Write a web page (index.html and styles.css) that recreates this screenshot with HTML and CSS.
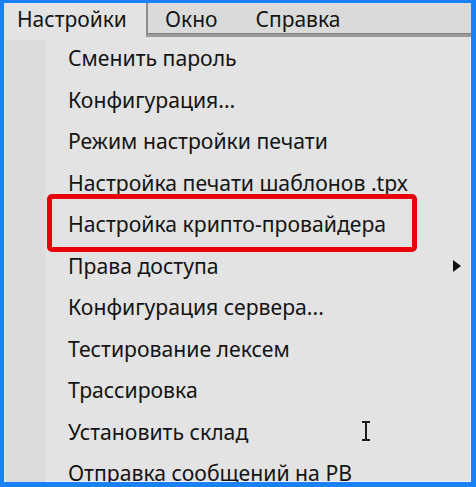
FILE: index.html
```html
<!DOCTYPE html>
<html lang="ru">
<head>
    <meta charset="UTF-8">
    <title>Меню Настройки</title>
    <link rel="stylesheet" href="styles.css">
</head>
<body>
    <div class="window">
        <div class="menubar">
            <div class="menu-tab open">Настройки</div>
            <div class="menu-rest">
                <span class="menu-tab">Окно</span>
                <span class="menu-tab">Справка</span>
            </div>
        </div>

        <div class="dropdown">
            <div class="icon-col"></div>
            <ul class="items">
                <li>Сменить пароль</li>
                <li>Конфигурация...</li>
                <li>Режим настройки печати</li>
                <li>Настройка печати шаблонов .tpx</li>
                <li class="marked">Настройка крипто-провайдера</li>
                <li class="has-sub">Права доступа <span class="arrow"></span></li>
                <li>Конфигурация сервера...</li>
                <li>Тестирование лексем</li>
                <li>Трассировка</li>
                <li>Установить склад <span class="ibeam"></span></li>
                <li>Отправка сообщений на РВ</li>
            </ul>
        </div>
    </div>
</body>
</html>
```
FILE: styles.css
```css
html, body {
    margin: 0;
    padding: 0;
}
body {
    width: 476px;
    height: 487px;
    font-family: "Noto Sans", "Open Sans", sans-serif;
    color: #141414;
    background: #1a80f5;
}
.window {
    box-sizing: border-box;
    width: 476px;
    height: 487px;
    border: 4px solid #1a80f5;
    border-top-width: 3px;
    border-right-width: 5px;
    border-bottom-width: 5px;
    background: #e3e3e3;
    overflow: hidden;
    display: flex;
    flex-direction: column;
    box-shadow: inset -1px -1px 0 #f4f4f4;
}
.menubar {
    display: flex;
    height: 34px;
    flex-shrink: 0;
    font-size: 21px;
}
.menu-tab {
    line-height: 32px;
}
.menu-tab.open {
    width: 129px;
    padding-left: 13px;
    background: #e3e3e3;
}
.menu-rest {
    flex: 1;
    display: flex;
    gap: 38px;
    padding-left: 17px;
    background: #dadada;
    border-left: 2px solid #8c8c8c;
    border-bottom: 3px solid #9a9a9a;
    box-shadow: inset 0 -1px 0 #7e7e7e;
}
.dropdown {
    flex: 1;
    display: flex;
}
.icon-col {
    width: 38px;
    margin-left: 2px;
    margin-top: 3px;
    background: #dbdbdb;
    border-right: 2px solid #dedede;
}
.items {
    list-style: none;
    margin: 0;
    padding: 0 0 0 22px;
    flex: 1;
    font-size: 21.2px;
}
.items li {
    position: relative;
    height: 41.5px;
    line-height: 41.5px;
    white-space: nowrap;
}
.marked::after {
    content: "";
    position: absolute;
    left: -21px;
    top: -9px;
    width: 360px;
    height: 48px;
    border: 5px solid #e8000b;
    border-radius: 5px;
}
.arrow {
    position: absolute;
    left: 385px;
    top: 15px;
    width: 0;
    height: 0;
    border-top: 6px solid transparent;
    border-bottom: 6px solid transparent;
    border-left: 8px solid #111;
}
.ibeam {
    position: absolute;
    left: 297px;
    top: 10px;
    width: 2px;
    height: 20px;
    background: #1a1a1a;
}
.ibeam::before,
.ibeam::after {
    content: "";
    position: absolute;
    left: -3px;
    width: 8px;
    height: 2px;
    background: #1a1a1a;
}
.ibeam::before {
    top: 0;
}
.ibeam::after {
    bottom: 0;
}
```
